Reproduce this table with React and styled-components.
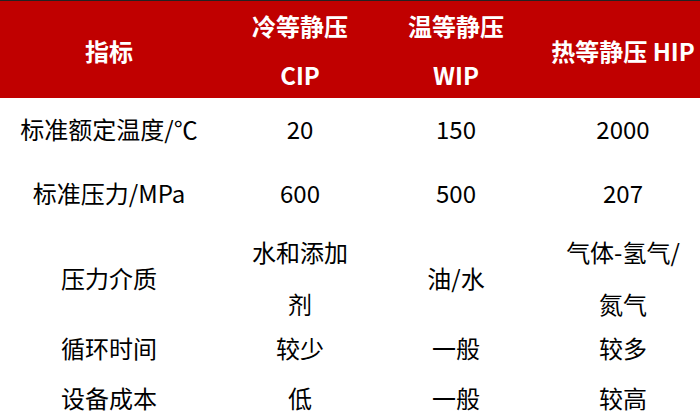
import React from "react";
import styled, { createGlobalStyle } from "styled-components";

const Global = createGlobalStyle`
  html, body { margin: 0; padding: 0; background: #fff; overflow: hidden; }
  body { font-family: "Noto Sans CJK SC", "Noto Sans", sans-serif; }
`;

const Table = styled.div`
  width: 716px;
  display: flex;
  flex-direction: column;
  border-top: 1px solid #222;
`;

const Row = styled.div`
  display: grid;
  grid-template-columns: 218px 164px 148px 186px;
  height: ${(p) => p.$h}px;
  background: ${(p) => (p.$head ? "#c00000" : "#fff")};
  color: ${(p) => (p.$head ? "#fff" : "#000")};
  font-weight: ${(p) => (p.$head ? 700 : 400)};
`;

const Cell = styled.div`
  display: flex;
  flex-direction: column;
  align-items: center;
  justify-content: center;
  text-align: center;
  padding-bottom: 4px;
  font-size: 24px;
  line-height: ${(p) => p.$lh || 36}px;
  white-space: nowrap;
`;

const rows = [
  { h: 97, head: true, lh: 49, cells: [["指标"], ["冷等静压", "CIP"], ["温等静压", "WIP"], ["热等静压 HIP"]] },
  { h: 66, cells: [["标准额定温度/℃"], ["20"], ["150"], ["2000"]] },
  { h: 62, cells: [["标准压力/MPa"], ["600"], ["500"], ["207"]] },
  { h: 94, lh: 52, cells: [["压力介质"], ["水和添加", "剂"], ["油/水"], ["气体-氢气/", "氮气"]] },
  { h: 60, cells: [["循环时间"], ["较少"], ["一般"], ["较多"]] },
  { h: 36, cells: [["设备成本"], ["低"], ["一般"], ["较高"]] },
];

export default function App() {
  return (
    <>
      <Global />
      <Table>
        {rows.map((r, i) => (
          <Row key={i} $h={r.h} $head={r.head}>
            {r.cells.map((lines, j) => (
              <Cell key={j} $lh={r.lh}>
                {lines.map((t, k) => (
                  <span key={k}>{t}</span>
                ))}
              </Cell>
            ))}
          </Row>
        ))}
      </Table>
    </>
  );
}
